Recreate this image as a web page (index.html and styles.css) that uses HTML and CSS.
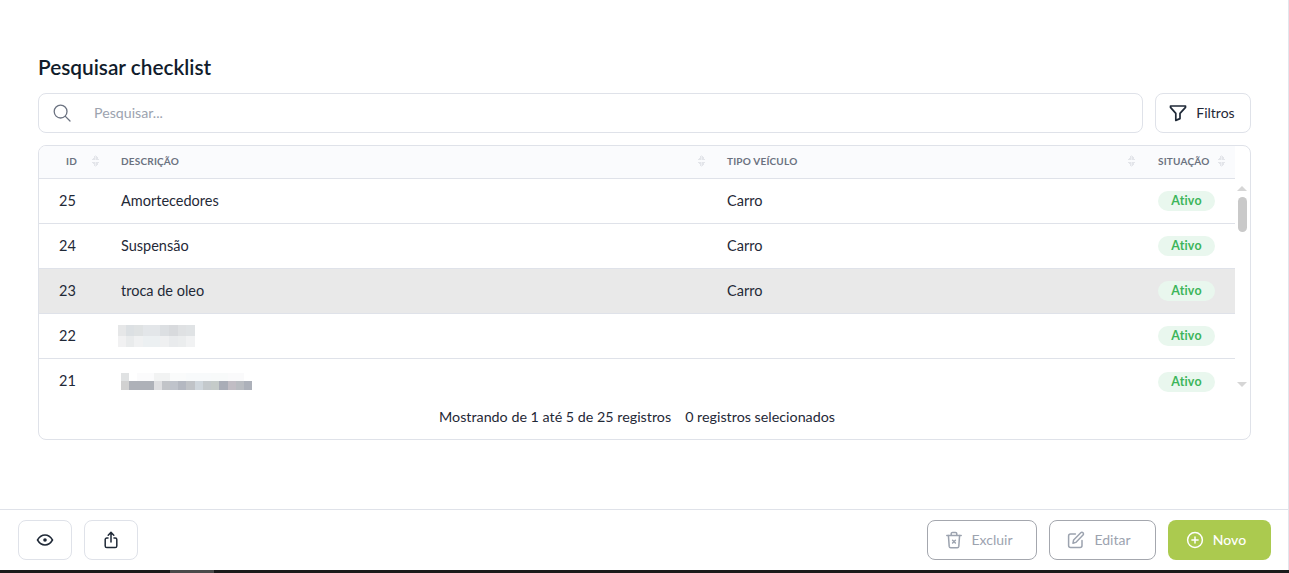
FILE: index.html
```html
<!DOCTYPE html>
<html lang="pt-BR">
<head>
    <meta charset="UTF-8">
    <meta name="viewport" content="width=device-width, initial-scale=1.0">
    <title>Pesquisar checklist</title>
    <link rel="stylesheet" href="styles.css">
</head>
<body>
    <div class="app">
        <main class="content">
            <h1 class="page-title">Pesquisar checklist</h1>

            <div class="search-row">
                <label class="search-box">
                    <svg class="search-icon" viewBox="0 0 18 18" width="18" height="18" fill="none" stroke="#6b7280" stroke-width="1.3" stroke-linecap="round">
                        <circle cx="7.6" cy="7.6" r="6.4"/>
                        <path d="M12.4 12.4 L17 17"/>
                    </svg>
                    <input type="text" class="search-input" placeholder="Pesquisar...">
                </label>
                <button class="btn-filter">
                    <svg viewBox="0 0 18 18" width="18" height="18" fill="none" stroke="#1f2937" stroke-width="1.7" stroke-linejoin="round">
                        <path d="M1.5 2 H16.5 V3.4 L11 9.4 V14.6 L6.8 16.4 V9.4 L1.5 3.4 Z"/>
                    </svg>
                    Filtros
                </button>
            </div>

            <section class="table-card">
                <div class="table-head">
                    <div class="th col-id">ID <span class="sort"></span></div>
                    <div class="th col-desc">DESCRIÇÃO <span class="sort"></span></div>
                    <div class="th col-type">TIPO VEÍCULO <span class="sort"></span></div>
                    <div class="th col-status">SITUAÇÃO <span class="sort"></span></div>
                </div>
                <div class="table-scroll">
                    <div class="rows">
                        <div class="row">
                            <div class="td col-id">25</div>
                            <div class="td col-desc">Amortecedores</div>
                            <div class="td col-type">Carro</div>
                            <div class="td col-status"><span class="badge">Ativo</span></div>
                        </div>
                        <div class="row">
                            <div class="td col-id">24</div>
                            <div class="td col-desc">Suspensão</div>
                            <div class="td col-type">Carro</div>
                            <div class="td col-status"><span class="badge">Ativo</span></div>
                        </div>
                        <div class="row row-selected">
                            <div class="td col-id">23</div>
                            <div class="td col-desc">troca de oleo</div>
                            <div class="td col-type">Carro</div>
                            <div class="td col-status"><span class="badge">Ativo</span></div>
                        </div>
                        <div class="row">
                            <div class="td col-id">22</div>
                            <div class="td col-desc"><span class="blur blur-a"></span></div>
                            <div class="td col-type"></div>
                            <div class="td col-status"><span class="badge">Ativo</span></div>
                        </div>
                        <div class="row row-last">
                            <div class="td col-id">21</div>
                            <div class="td col-desc"><span class="blur blur-b"></span></div>
                            <div class="td col-type"></div>
                            <div class="td col-status"><span class="badge">Ativo</span></div>
                        </div>
                    </div>
                    <div class="scrollbar">
                        <span class="arrow-up"></span>
                        <div class="scroll-track"><span class="scroll-thumb"></span></div>
                        <span class="arrow-down"></span>
                    </div>
                </div>
                <div class="table-info">
                    <span>Mostrando de 1 até 5 de 25 registros</span>
                    <span>0 registros selecionados</span>
                </div>
            </section>
        </main>

        <footer class="toolbar">
            <div class="toolbar-group">
                <button class="btn-icon">
                    <svg viewBox="0 0 18 18" width="18" height="18" fill="none" stroke="#1f2937" stroke-width="1.5">
                        <path d="M1.5 9 C3.5 5.6 6 4 9 4 C12 4 14.5 5.6 16.5 9 C14.5 12.4 12 14 9 14 C6 14 3.5 12.4 1.5 9 Z"/>
                        <circle cx="9" cy="9" r="1.8" fill="#1f2937" stroke="none"/>
                    </svg>
                </button>
                <button class="btn-icon">
                    <svg viewBox="0 0 18 18" width="18" height="18" fill="none" stroke="#1f2937" stroke-width="1.5" stroke-linecap="round" stroke-linejoin="round">
                        <path d="M6 7 H4.8 C3.8 7 3.2 7.6 3.2 8.6 V15 C3.2 16 3.8 16.6 4.8 16.6 H13.2 C14.2 16.6 14.8 16 14.8 15 V8.6 C14.8 7.6 14.2 7 13.2 7 H12"/>
                        <path d="M9 11 V1.6 M6.2 4.2 L9 1.4 L11.8 4.2"/>
                    </svg>
                </button>
            </div>
            <div class="toolbar-group">
                <button class="btn-outline btn-delete">
                    <svg viewBox="0 0 18 18" width="18" height="18" fill="none" stroke="#9ca3af" stroke-width="1.5" stroke-linecap="round" stroke-linejoin="round">
                        <path d="M1.8 4.4 H16.2 M6.2 4.4 V2.8 C6.2 2 6.8 1.4 7.6 1.4 H10.4 C11.2 1.4 11.8 2 11.8 2.8 V4.4"/>
                        <path d="M3.4 4.4 L4.2 15.4 C4.3 16.2 4.9 16.8 5.7 16.8 H12.3 C13.1 16.8 13.7 16.2 13.8 15.4 L14.6 4.4"/>
                        <path d="M7.6 9.2 L10.4 12 M10.4 9.2 L7.6 12"/>
                    </svg>
                    Excluir
                </button>
                <button class="btn-outline btn-edit">
                    <svg viewBox="0 0 18 18" width="18" height="18" fill="none" stroke="#9ca3af" stroke-width="1.5" stroke-linecap="round" stroke-linejoin="round">
                        <path d="M8.4 3 H3.6 C2.4 3 1.6 3.8 1.6 5 V14.4 C1.6 15.6 2.4 16.4 3.6 16.4 H13 C14.2 16.4 15 15.6 15 14.4 V9.6"/>
                        <path d="M6 12.2 L6.6 9 L13.8 1.8 C14.4 1.2 15.4 1.2 16 1.8 C16.6 2.4 16.6 3.4 16 4 L8.8 11.4 Z"/>
                    </svg>
                    Editar
                </button>
                <button class="btn-new">
                    <svg viewBox="0 0 18 18" width="18" height="18" fill="none" stroke="#ffffff" stroke-width="1.5" stroke-linecap="round">
                        <circle cx="9" cy="9" r="7.4"/>
                        <path d="M9 5.9 V12.1 M5.9 9 H12.1"/>
                    </svg>
                    Novo
                </button>
            </div>
        </footer>

        <div class="taskbar"><span class="taskbar-item"></span></div>
    </div>
</body>
</html>
```

FILE: styles.css
```css
* {
    box-sizing: border-box;
}

html, body {
    margin: 0;
    height: 100%;
    overflow: hidden;
}

body {
    font-family: "Lato", "Open Sans", sans-serif;
    color: #1f2937;
    background: #fff;
}

.app {
    height: 573px;
    display: flex;
    flex-direction: column;
    border-right: 1px solid #e2e5ec;
}

button {
    font-family: inherit;
    cursor: pointer;
}

/* area principal */
.content {
    flex: 1;
    padding: 55px 37px 0 38px;
}

.page-title {
    margin: 0 0 15px;
    font-size: 20.8px;
    line-height: 23px;
    font-weight: 600;
    color: #111c2b;
}

.search-row {
    display: flex;
    gap: 12px;
    margin-bottom: 12px;
}

.search-box {
    flex: 1;
    height: 40px;
    display: flex;
    align-items: center;
    padding-left: 14px;
    border: 1px solid #dfe2e9;
    border-radius: 8px;
}

.search-icon {
    margin-right: 23px;
}

.search-input {
    flex: 1;
    border: none;
    outline: none;
    padding: 0 0 2px;
    font-family: inherit;
    font-size: 14.2px;
    color: #1f2937;
}

.search-input::placeholder {
    color: #9ca3af;
}

.btn-filter {
    width: 96px;
    height: 40px;
    display: flex;
    align-items: center;
    justify-content: center;
    gap: 9px;
    padding: 0 2px 2px 0;
    background: #fff;
    border: 1px solid #dfe2e9;
    border-radius: 8px;
    font-size: 14px;
    color: #1f2937;
}

.btn-filter svg {
    margin-top: 2px;
}

/* tabela */
.table-card {
    height: 295px;
    border: 1px solid #dfe2e9;
    border-radius: 8px;
    overflow: hidden;
}

.table-head {
    height: 33px;
    display: flex;
    margin-right: 15px;
    background: #fafbfd;
    border-bottom: 1px solid #dfe2e9;
}

.row {
    height: 45px;
    display: flex;
    border-bottom: 1px solid #dfe2e9;
}

.row-last {
    border-bottom: none;
}

.row-selected {
    background: #e9e9e9;
}

.col-id {
    width: 70px;
    padding-left: 20px;
}

.col-desc {
    width: 606px;
    padding-left: 12px;
}

.col-type {
    width: 430px;
    padding-left: 12px;
}

.col-status {
    flex: 1;
    padding-left: 13px;
}

.th {
    position: relative;
    display: flex;
    align-items: center;
    padding-bottom: 2px;
    font-size: 10px;
    font-weight: 700;
    letter-spacing: 0.2px;
    color: #6b7280;
}

.th.col-id {
    padding-left: 27px;
}

.sort {
    position: absolute;
    right: 10px;
    top: 9px;
    width: 7px;
    height: 12px;
    background:
        linear-gradient(to bottom right, transparent 50%, #e3e5ea 50%) 0 0 / 3.5px 5px no-repeat,
        linear-gradient(to bottom left, transparent 50%, #e3e5ea 50%) 3.5px 0 / 3.5px 5px no-repeat,
        linear-gradient(to top right, transparent 50%, #e3e5ea 50%) 0 7px / 3.5px 5px no-repeat,
        linear-gradient(to top left, transparent 50%, #e3e5ea 50%) 3.5px 7px / 3.5px 5px no-repeat;
}

.td {
    display: flex;
    align-items: center;
    padding-bottom: 2px;
    font-size: 14.5px;
    color: #1f2937;
}

.badge {
    width: 57px;
    height: 20px;
    margin-top: 2px;
    display: flex;
    align-items: center;
    justify-content: center;
    padding-bottom: 1px;
    border-radius: 10px;
    background: #e9f7ee;
    color: #3cb55a;
    font-size: 12.4px;
    font-weight: 700;
    letter-spacing: 0.2px;
}

/* trechos borrados */
.blur {
    display: block;
}

.blur-a {
    width: 77px;
    height: 22px;
    margin-left: -3px;
    margin-top: 2px;
    background:
        linear-gradient(to right, #e6e7e8 0 8px, #dce0e3 8px 16px, #dfe2e3 16px 25px, #e3e6e9 25px 42px, #dcdfe2 42px 51px, #d8dadd 51px 60px, #dfe1e3 60px 68px, #e0e3e5 68px 77px) 0 0 / 100% 11px no-repeat,
        linear-gradient(to right, #f1f1f2 0 8px, #e9ebec 8px 16px, #f0f1f2 16px 25px, #ecf0f2 25px 42px, #eff0f1 42px 51px, #e9ebed 51px 60px, #ebedee 60px 68px, #f1f2f3 68px 77px) 0 11px / 100% 11px no-repeat;
}

.blur-b {
    width: 131px;
    height: 17px;
    margin-top: 1px;
    background:
        linear-gradient(to right, #e0e2e3 0 8px, #fff 8px 16px, #fbfbfc 16px 33px, #f2f3f3 33px 49px, #fafbfb 49px 65px, #f8fafb 65px 90px, #f8fafa 90px 107px, #fafafb 107px 123px, #fff 123px) 0 0 / 100% 8px no-repeat,
        linear-gradient(to right, #d1d1d1 0 8px, #aeb1b8 8px 33px, #dfdfe1 33px 41px, #c2c4c8 41px 49px, #bfc3cb 49px 57px, #b4b8c1 57px 65px, #c0c3c7 65px 74px, #cfd6dc 74px 82px, #c4c9cc 82px 90px, #c5cbc9 90px 98px, #a9adb7 98px 107px, #c1bdc4 107px 115px, #b9bcc1 115px 123px, #adb1ba 123px 131px) 0 8px / 100% 9px no-repeat;
}

/* barra de rolagem */
.table-scroll {
    height: 225px;
    display: flex;
    align-items: stretch;
}

.rows {
    flex: 1;
    overflow: hidden;
}

.scrollbar {
    width: 15px;
    display: flex;
    flex-direction: column;
    align-items: center;
    padding: 7px 1px 0 0;
}

.arrow-up {
    width: 0;
    height: 0;
    border-left: 5px solid transparent;
    border-right: 5px solid transparent;
    border-bottom: 5px solid #d6d6d6;
}

.arrow-down {
    width: 0;
    height: 0;
    border-left: 5px solid transparent;
    border-right: 5px solid transparent;
    border-top: 5px solid #d6d6d6;
}

.scroll-track {
    height: 191px;
    padding-top: 6px;
}

.scroll-thumb {
    display: block;
    width: 9px;
    height: 35px;
    border-radius: 5px;
    background: #c9c9c9;
}

.table-info {
    height: 26px;
    display: flex;
    justify-content: center;
    align-items: center;
    gap: 14px;
    padding: 0 15px 2px 0;
    font-size: 14.3px;
    color: #1f2937;
}

/* barra inferior */
.toolbar {
    height: 61px;
    display: flex;
    justify-content: space-between;
    align-items: center;
    padding: 0 17px 0 18px;
    border-top: 1px solid #dfe2e9;
}

.toolbar-group {
    display: flex;
    gap: 12px;
}

.btn-icon {
    width: 54px;
    height: 40px;
    display: flex;
    align-items: center;
    justify-content: center;
    padding: 0;
    background: #fff;
    border: 1px solid #dfe2e9;
    border-radius: 8px;
}

.btn-outline {
    height: 40px;
    display: flex;
    align-items: center;
    justify-content: center;
    gap: 9px;
    padding: 0 7px 2px 0;
    background: #fff;
    border: 1px solid #a4a7ae;
    border-radius: 8px;
    color: #9ca3af;
    font-size: 14px;
}

.btn-outline svg, .btn-new svg {
    margin-top: 2px;
}

.btn-delete {
    width: 110px;
}

.btn-edit {
    width: 107px;
}

.btn-new {
    width: 103px;
    height: 40px;
    display: flex;
    align-items: center;
    justify-content: center;
    gap: 9px;
    padding: 0 7px 2px 0;
    background: #abca4f;
    border: none;
    border-radius: 8px;
    color: #fff;
    font-size: 14px;
    font-weight: 500;
}

.taskbar {
    height: 3px;
    margin-right: -1px;
    background: #1a1a1a;
    padding-left: 170px;
}

.taskbar-item {
    display: block;
    width: 44px;
    height: 3px;
    background: #4a4a4a;
}
```
